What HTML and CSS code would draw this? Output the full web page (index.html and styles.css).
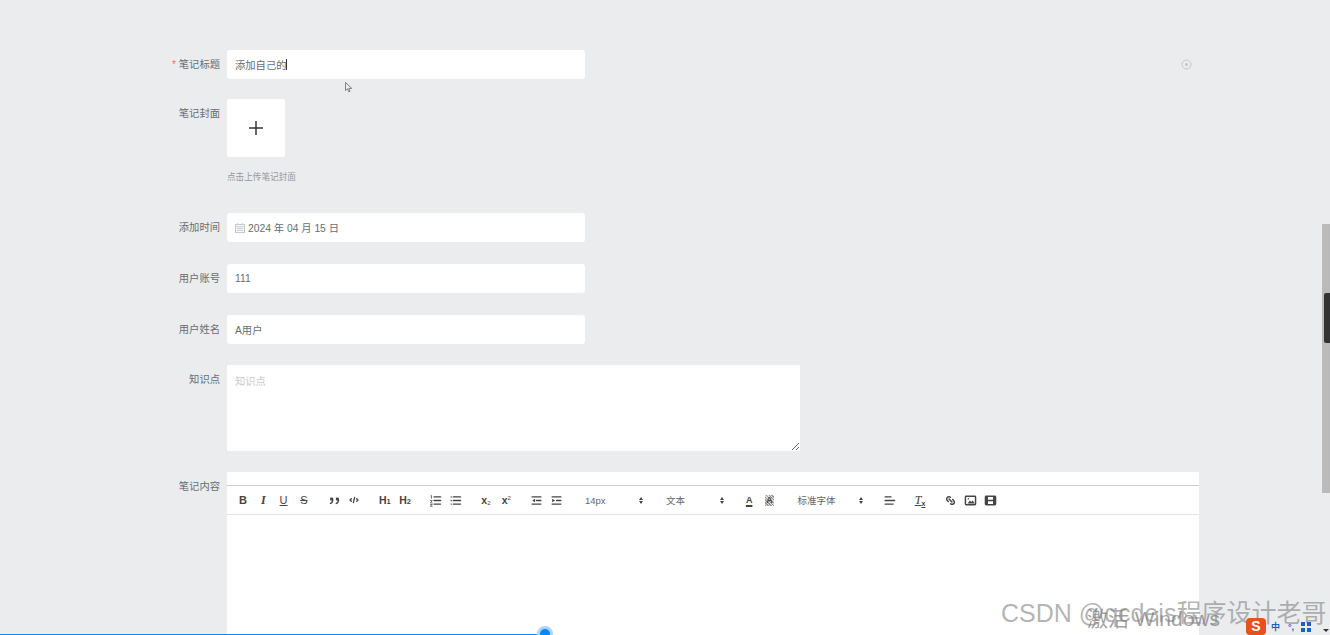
FILE: index.html
```html
<!DOCTYPE html>
<html lang="zh-CN">
<head>
  <meta charset="UTF-8">
  <title>笔记</title>
  <link rel="stylesheet" href="styles.css">
</head>
<body>
  <form class="note-form">
    <div class="form-row title-row">
      <label class="form-label"><span class="required">*</span> 笔记标题</label>
      <div class="text-box">添加自己的<span class="caret"></span></div>
    </div>

    <div class="form-row cover-row">
      <label class="form-label">笔记封面</label>
      <div class="cover-field">
        <div class="cover-upload">
          <svg width="16" height="16" viewBox="0 0 16 16"><path d="M8 1v14M1 8h14" stroke="#333" stroke-width="1.5" fill="none"/></svg>
        </div>
        <div class="cover-hint">点击上传笔记封面</div>
      </div>
    </div>

    <div class="form-row">
      <label class="form-label">添加时间</label>
      <div class="text-box">
        <svg class="date-icon" width="10" height="10" viewBox="0 0 10 10" fill="none" stroke="#c0c4cc" stroke-width="0.9"><rect x="0.5" y="1.5" width="9" height="8"/><path d="M0.5 3.8h9M2.5 0v2M7.5 0v2M2 5.5h6M2 7.5h6"/></svg>
        <span>2024 年 04 月 15 日</span>
      </div>
    </div>

    <div class="form-row">
      <label class="form-label">用户账号</label>
      <div class="text-box">111</div>
    </div>

    <div class="form-row row-tight">
      <label class="form-label">用户姓名</label>
      <div class="text-box">A用户</div>
    </div>

    <div class="form-row row-tight">
      <label class="form-label">知识点</label>
      <textarea class="text-area" placeholder="知识点"></textarea>
    </div>

    <div class="form-row">
      <label class="form-label">笔记内容</label>
      <div class="editor">
        <div class="editor-toolbar">
          <span class="tool-group">
            <span class="tool tool-bold">B</span>
            <span class="tool tool-italic">I</span>
            <span class="tool tool-under">U</span>
            <span class="tool tool-strike">S</span>
          </span>
          <span class="tool-group">
            <span class="tool"><svg width="13" height="13" viewBox="0 0 18 18"><rect class="fill" width="4" height="4" x="3" y="5"/><rect class="fill" width="4" height="4" x="11" y="5"/><path class="ic" d="M6.500 8c0 4-3 5-3 5M14.500 8c0 4-3 5-3 5"/></svg></span>
            <span class="tool"><svg width="12" height="12" viewBox="0 0 18 18"><polyline class="ic" points="5 7 3 9 5 11"/><polyline class="ic" points="13 7 15 9 13 11"/><line class="ic" x1="10" x2="8" y1="5" y2="13"/></svg></span>
          </span>
          <span class="tool-group">
            <span class="tool tool-head">H<small>1</small></span>
            <span class="tool tool-head">H<small>2</small></span>
          </span>
          <span class="tool-group">
            <span class="tool"><svg width="13" height="13" viewBox="0 0 18 18"><path class="ic" d="M7 4h9M7 9h9M7 14h9"/><path class="ic thin" d="M2.500 2.500l1-.5v4M2 9h2.500L2 12.500h2.500M2 14.500h2.500l-1 1.200 1 1.300H2"/></svg></span>
            <span class="tool"><svg width="13" height="13" viewBox="0 0 18 18"><path class="ic" d="M6 4h10M6 9h10M6 14h10M3 4h.01M3 9h.01M3 14h.01"/></svg></span>
          </span>
          <span class="tool-group">
            <span class="tool tool-script">x<small>2</small></span>
            <span class="tool tool-script">x<sup>2</sup></span>
          </span>
          <span class="tool-group">
            <span class="tool"><svg width="13" height="13" viewBox="0 0 18 18"><path class="ic" d="M3 4h12M9 9h6M3 14h12"/><path class="fill" d="M7 6.500v5L3 9z"/></svg></span>
            <span class="tool"><svg width="13" height="13" viewBox="0 0 18 18"><path class="ic" d="M3 4h12M9 9h6M3 14h12"/><path class="fill" d="M3 6.500v5L7 9z"/></svg></span>
          </span>
          <span class="tool-picker">14px<span class="updown"></span></span>
          <span class="tool-picker">文本<span class="updown"></span></span>
          <span class="tool-group">
            <span class="tool tool-color">A</span>
            <span class="tool"><span class="tool-bg">A</span></span>
          </span>
          <span class="tool-picker picker-wide">标准字体<span class="updown"></span></span>
          <span class="tool-group">
            <span class="tool"><svg width="13" height="13" viewBox="0 0 18 18"><path class="ic" d="M3 4h8M3 9h13M3 14h11"/></svg></span>
          </span>
          <span class="tool-group">
            <span class="tool tool-clean">T<small>x</small></span>
          </span>
          <span class="tool-group">
            <span class="tool"><svg width="13" height="13" viewBox="0 0 18 18"><line class="ic" x1="7" x2="11" y1="7" y2="11"/><path class="ic" d="M8.900 4.600a3 3 0 0 0-4.300 0 3 3 0 0 0 0 4.300l1.400 1.500M9.100 13.400a3 3 0 0 0 4.300 0 3 3 0 0 0 0-4.300L12 7.600"/></svg></span>
            <span class="tool"><svg width="13" height="13" viewBox="0 0 18 18"><rect class="ic" x="2" y="3" width="14" height="12" rx="1"/><path class="fill" d="M5 13l3-4 2 2 2-2 3 4z"/><circle class="fill" cx="6" cy="6.500" r="1"/></svg></span>
            <span class="tool"><svg width="13" height="13" viewBox="0 0 18 18"><rect class="ic" x="2" y="3" width="14" height="12" rx="1"/><path class="fill" d="M2 3h3.500v12H2zM12.500 3H16v12h-3.500z"/><path class="ic" d="M5 9h8"/></svg></span>
          </span>
        </div>
        <div class="editor-body"></div>
      </div>
    </div>
  </form>

  <!-- stuff lying over the page -->
  <svg class="side-dot" width="11" height="11" viewBox="0 0 11 11" fill="none"><circle cx="5.500" cy="5.500" r="4.500" stroke="#c4c6ca"/><circle cx="5.500" cy="5.500" r="1.500" fill="#c4c6ca"/></svg>
  <svg class="mouse-pointer" width="8" height="11" viewBox="0 0 8 11"><path d="M.5.500v8l2-1.700 1.300 3 1.200-.5-1.200-2.900h3z" fill="#eceef0" stroke="#666" stroke-width=".8"/></svg>
  <div class="scroll-track"><div class="scroll-thumb"></div></div>
  <div class="progress-line"></div>
  <div class="progress-dot"></div>
  <div class="win-mark">激活 Windows</div>
  <div class="csdn-mark">CSDN @qcdeis程序设计老哥</div>
  <div class="tray">
    <span class="tray-logo">S</span>
    <span class="tray-zh">中</span>
    <span class="tray-punct">°,</span>
    <svg width="10" height="10" viewBox="0 0 10 10" fill="#1565c0"><path d="M0 0h4v4H0zM6 0h4v4H6zM0 6h4v4H0zM6 6h4v4H6z"/></svg>
    <span class="tray-arrow"></span>
  </div>
</body>
</html>
```

FILE: styles.css
```css
html, body {
  height: 100%;
}
body {
  margin: 0;
  overflow: hidden;
  background-color: #ebecee;
  color: #696c71;
  font-family: "Liberation Sans", "Noto Sans CJK SC", sans-serif;
  font-size: 10.3px;
}

.note-form {
  padding: 50px 131px 0 0;
}
.form-row {
  display: flex;
  margin-bottom: 22px;
}
.row-tight {
  margin-bottom: 21px;
}
.title-row {
  margin-bottom: 20px;
}
.cover-row {
  margin-bottom: 20px;
}
.form-label {
  flex: none;
  width: 220px;
  margin-right: 7px;
  line-height: 29px;
  text-align: right;
  color: #696c71;
}
.required {
  color: #f56c6c;
}

.text-box {
  display: flex;
  align-items: center;
  box-sizing: border-box;
  width: 358px;
  height: 29px;
  padding: 0 8px;
  background-color: #fff;
  border-radius: 3px;
}
.caret {
  width: 1px;
  height: 11px;
  background-color: #333;
}
.date-icon {
  margin-right: 3px;
}

.cover-upload {
  display: flex;
  align-items: center;
  justify-content: center;
  width: 58px;
  height: 58px;
  background-color: #fff;
  border-radius: 3px;
}
.cover-hint {
  height: 36px;
  padding-top: 14px;
  box-sizing: border-box;
  font-size: 8.6px;
  line-height: 13px;
  color: #95989e;
}

.text-area {
  display: block;
  box-sizing: border-box;
  width: 573px;
  height: 86px;
  padding: 8px;
  border: 0;
  border-radius: 0;
  outline: none;
  resize: both;
  background-color: #fff;
  font: inherit;
  color: #606266;
}
.text-area::placeholder {
  color: #c8cacf;
}

.editor {
  flex: none;
  width: 972px;
  padding-top: 13px;
  background-color: #fff;
}
.editor-toolbar {
  display: flex;
  align-items: center;
  height: 28px;
  padding-left: 5.85px;
  border-top: 1px solid #ccc;
  border-bottom: 1px solid #e4e4e4;
  color: #444;
}
.editor-body {
  height: 300px;
}
.tool-group {
  display: flex;
  margin-right: 10px;
}
.tool {
  display: flex;
  align-items: center;
  justify-content: center;
  width: 20.3px;
  height: 20px;
  font-size: 11px;
  color: #444;
}
.tool-bold {
  font-weight: bold;
}
.tool-italic {
  font-family: "Liberation Serif", serif;
  font-style: italic;
  font-weight: bold;
  font-size: 12px;
}
.tool-under {
  text-decoration: underline;
}
.tool-strike {
  text-decoration: line-through;
}
.tool-head {
  font-weight: bold;
  font-size: 10.5px;
}
.tool-head small {
  font-size: 7.5px;
  margin-top: 3px;
}
.tool-script {
  font-weight: bold;
  font-size: 10.5px;
}
.tool-script small,
.tool-script sup {
  font-size: 6px;
  font-weight: normal;
}
.tool-script small {
  margin-top: 5px;
}
.tool-script sup {
  margin-bottom: 5px;
}
.tool-color {
  font-weight: bold;
  font-size: 9px;
  text-decoration: underline;
  text-underline-offset: 2px;
  text-decoration-thickness: 1.5px;
}
.tool-bg {
  padding: 0 1px;
  background: repeating-linear-gradient(45deg, #999 0 1px, #ddd 1px 2px);
  font-size: 9px;
  line-height: 11px;
  font-weight: bold;
}
.tool-clean {
  font-family: "Liberation Serif", serif;
  font-style: italic;
  font-size: 12px;
  text-decoration: underline;
}
.tool-clean small {
  font-family: "Liberation Sans", sans-serif;
  font-style: normal;
  font-weight: bold;
  font-size: 7px;
  margin-top: 6px;
}
.tool-picker {
  display: flex;
  align-items: center;
  justify-content: space-between;
  box-sizing: border-box;
  width: 71px;
  margin-right: 10px;
  padding: 0 4px 0 8px;
  font-size: 9.5px;
  color: #666;
}
.picker-wide {
  width: 80px;
  padding-right: 6px;
}
.updown {
  position: relative;
  width: 5px;
  height: 1px;
}
.updown::before,
.updown::after {
  content: "";
  position: absolute;
  left: 0;
  border-left: 2.5px solid transparent;
  border-right: 2.5px solid transparent;
}
.updown::before {
  bottom: 100%;
  border-bottom: 3px solid #444;
}
.updown::after {
  top: 100%;
  border-top: 3px solid #444;
}
.ic {
  fill: none;
  stroke: #444;
  stroke-width: 2;
  stroke-linecap: round;
  stroke-linejoin: round;
}
.ic.thin {
  stroke-width: 1;
}
.fill {
  fill: #444;
}

.side-dot {
  position: absolute;
  left: 1181px;
  top: 59px;
}
.mouse-pointer {
  position: absolute;
  left: 345px;
  top: 82px;
}
.scroll-track {
  position: absolute;
  left: 1322px;
  top: 224px;
  width: 8px;
  height: 269px;
  background-color: #bababa;
}
.scroll-thumb {
  position: absolute;
  left: 2px;
  top: 69px;
  width: 6px;
  height: 50px;
  background-color: #333;
  border-radius: 2px 0 0 2px;
}
.progress-line {
  position: absolute;
  left: 0;
  bottom: 0;
  width: 545px;
  height: 1.500px;
  background-color: #0a84ff;
}
.progress-dot {
  position: absolute;
  left: 540px;
  top: 629px;
  width: 10px;
  height: 10px;
  border-radius: 50%;
  background-color: #0a84ff;
  box-shadow: 0 0 0 3px #a9d4ff;
}
.win-mark {
  position: absolute;
  left: 1087px;
  top: 605px;
  font-size: 21px;
  line-height: 27px;
  color: rgba(120, 120, 120, 0.7);
}
.csdn-mark {
  position: absolute;
  left: 1001px;
  top: 597px;
  font-size: 25px;
  line-height: 32px;
  white-space: nowrap;
  color: rgba(130, 130, 130, 0.6);
}
.tray {
  position: absolute;
  left: 1246px;
  top: 618px;
  display: flex;
  align-items: center;
  gap: 5px;
  height: 17px;
}
.tray-logo {
  width: 20px;
  height: 17px;
  border-radius: 4px;
  background-color: #e8501c;
  color: #fff;
  font-weight: bold;
  font-size: 14px;
  line-height: 17px;
  text-align: center;
}
.tray-zh {
  margin-right: 3px;
  font-size: 9px;
  font-weight: bold;
  color: #1565c0;
}
.tray-punct {
  width: 8px;
  font-size: 9px;
  font-weight: bold;
  color: #1565c0;
}
.tray-arrow {
  margin-left: 7px;
  margin-top: 8px;
  border-left: 3px solid transparent;
  border-right: 3px solid transparent;
  border-top: 3px solid #333;
}
```
